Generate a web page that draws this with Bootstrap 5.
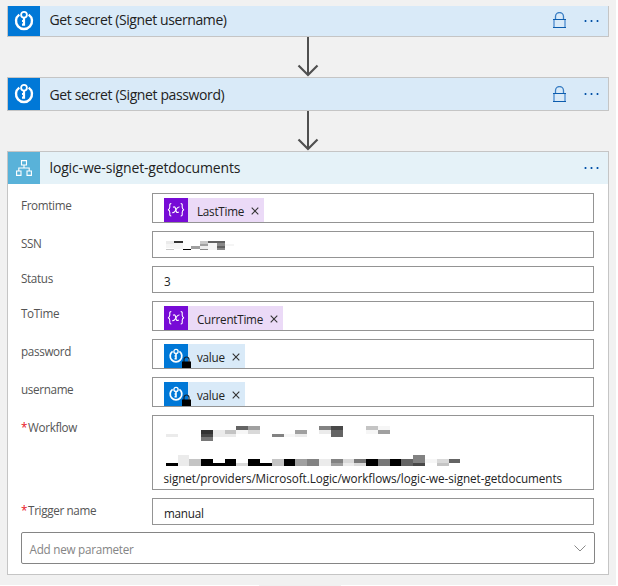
<!DOCTYPE html>
<html lang="en">
<head>
<meta charset="utf-8">
<meta name="viewport" content="width=device-width, initial-scale=1">
<title>Logic app designer</title>
<link href="https://cdn.jsdelivr.net/npm/bootstrap@5.3.0/dist/css/bootstrap.min.css" rel="stylesheet">
<style>
html,body{height:586px;overflow:hidden}
body{background:#fff;font-family:"Open Sans","Noto Sans",sans-serif;font-size:11.7px;letter-spacing:-.25px;line-height:16px;color:#222}
svg{display:block;flex:none}
.canvas{width:616px;height:585px;background:#f1f1f1;padding:6px 7px 0}
.step{width:602px;border:1px solid #c5c5c5}
.step-first{border-top:0}
.step-head{height:32px;background:#d9eaf8;font-size:14px;line-height:20px}
.step-first .step-head{height:30px}
.step-first .step-icon{height:30px;padding-bottom:1px}
.step-first .tools{padding-bottom:1px}
.step-head.flow{background:#e5f2f8}
.step-icon{width:32px;height:32px;background:#0078d7}
.flow .step-icon{background:#59b2d9}
.step-name{padding-left:9.5px;padding-top:1px;letter-spacing:-.38px}
.step-first .step-name{padding-top:0;padding-bottom:2px;letter-spacing:-.4px}
.flow .step-name{letter-spacing:-.15px;padding-top:0}
.tools{padding-right:9px;gap:18px}
.arrow{margin-left:290px;height:40px}
.panel{padding:9px 14px 10px 13px}
.fields{gap:8px}
.lbl{width:131px;color:#555;padding-top:4px;letter-spacing:-.35px}
.req{color:#e81123;margin-right:1px}
.box{width:442px;height:27px;border:1px solid #949494;padding-left:11px;color:#222}
.val{padding-top:2px}
.path{letter-spacing:-.06px;margin-left:-.5px}
.tall{height:30px}
.area{height:75px}
.token{height:24px;background:#ebdaf7;margin-top:4px}
.token .sq{width:24px;height:24px;background:#770bd6;margin-right:9px}
.token .nm{padding-top:1px}
.token.vault{background:#d9eaf8}
.token.vault .sq{background:#0078d7}
.token.vault .nm{padding-top:2px}
.token svg.x{margin:2px 5px 0 7px}
.combo{width:574px;height:32px;border:1px solid #858585;border-radius:2px;margin-top:7px;padding:1px 8px 0 7.5px;color:#858585}
.combo svg{margin-top:-1px}
.edge{width:82px;height:1px;margin-left:259px;background:#f1f1f1}
</style>
<script src="https://cdn.jsdelivr.net/npm/bootstrap@5.3.0/dist/js/bootstrap.bundle.min.js"></script>
</head>
<body>
<svg width="0" height="0" class="position-absolute">
<defs>
<symbol id="key" viewBox="0 0 20 22"><g fill="none" stroke="#fff"><path d="M5.300 4.600A8 8 0 1 0 14.700 4.600" stroke-width="2.400"/><circle cx="10" cy="4.700" r="2.900" stroke-width="1.800"/><path d="M10 7.500V15.800M10.600 11H8M10.600 14.600H8" stroke-width="2.200"/></g></symbol>
<symbol id="lock" viewBox="0 0 13 17"><path d="M2.500 7.500V4.500a4 4 0 0 1 8 0V7.500" fill="none" stroke="#3b7fc4" stroke-width="1.300"/><path d="M1 7v9M12 7v9" stroke="#7dacdd" stroke-width="2"/><path d="M0 7.500h13M0 15.500h13" stroke="#0c5cad"/></symbol>
<symbol id="dots" viewBox="0 0 15 2"><path d="M0 0h3v2H0zM6 0h3v2H6zM12 0h3v2h-3z" fill="#8dbbe6"/><path d="M1 0h1v2H1zM7 0h1v2H7zM13 0h1v2h-1z" fill="#0b4f9e"/></symbol>
<symbol id="down" viewBox="0 0 22 40"><path d="M11 0v38" stroke="#505050" stroke-width="2"/><path d="M1.500 28.500L11 38L20.500 28.500" fill="none" stroke="#505050" stroke-width="2.200"/></symbol>
<symbol id="cross" viewBox="0 0 8 8"><path d="M.7.7l6.600 6.600M7.300.7L.7 7.300" stroke="#333" stroke-width="1.100"/></symbol>
<symbol id="padlock" viewBox="0 0 9 12"><path d="M2 6V3.500a2.500 2.500 0 0 1 5 0V6" fill="none" stroke="#123" stroke-width="1.200"/><path d="M0 5.500h9V12H0z" fill="#000"/></symbol>
<symbol id="var" viewBox="0 0 24 24"><g fill="none" stroke="#fff" stroke-width="1.100"><path d="M7.300 5.500C5.300 5.500 5.800 7 5.800 9C5.800 11 5.300 11.500 4 11.700C5.300 12 5.800 12.600 5.800 14.600C5.800 16.600 5.300 18 7.300 18M16.700 5.500C18.700 5.500 18.200 7 18.200 9C18.200 11 18.700 11.500 20 11.700C18.700 12 18.200 12.600 18.200 14.600C18.200 16.600 18.700 18 16.700 18"/><path d="M9 9.300C11.300 8 11.300 10 11.800 12S12.700 15.300 14.700 14M15.500 9C13.500 8.500 12.500 11 11.500 12.500S9.800 15.200 8.300 14.500"/></g></symbol>
</defs>
</svg>

<main class="canvas">
  <section class="step step-first">
    <div class="step-head d-flex align-items-center">
      <div class="step-icon d-flex align-items-center justify-content-center"><svg width="20" height="22"><use href="#key"/></svg></div>
      <div class="step-name flex-grow-1">Get secret (Signet username)</div>
      <div class="tools d-flex align-items-center"><svg width="13" height="17"><use href="#lock"/></svg><svg width="15" height="2"><use href="#dots"/></svg></div>
    </div>
  </section>
  <svg class="arrow" width="22" height="40"><use href="#down"/></svg>
  <section class="step">
    <div class="step-head d-flex align-items-center">
      <div class="step-icon d-flex align-items-center justify-content-center"><svg width="20" height="22"><use href="#key"/></svg></div>
      <div class="step-name flex-grow-1">Get secret (Signet password)</div>
      <div class="tools d-flex align-items-center"><svg width="13" height="17"><use href="#lock"/></svg><svg width="15" height="2"><use href="#dots"/></svg></div>
    </div>
  </section>
  <svg class="arrow" width="22" height="40"><use href="#down"/></svg>
  <section class="step bg-white">
    <div class="step-head flow d-flex align-items-center">
      <div class="step-icon d-flex align-items-center justify-content-center">
        <svg width="16" height="16" viewBox="0 0 16 16" fill="none" stroke="#fff" stroke-width="1.100"><path d="M5.500.6h5v4.400h-5zM.6 11h4.400v4.400H.6zM11 11h4.400v4.400H11zM8 5v3M2.800 11V8h10.400v3"/></svg>
      </div>
      <div class="step-name flex-grow-1">logic-we-signet-getdocuments</div>
      <div class="tools d-flex align-items-center"><svg width="15" height="2"><use href="#dots"/></svg></div>
    </div>
    <div class="panel">
      <div class="fields d-flex flex-column">
        <div class="d-flex"><div class="lbl">Fromtime</div><div class="box tall d-flex"><div class="token d-flex align-items-center"><span class="sq"><svg width="24" height="24"><use href="#var"/></svg></span><span class="nm">LastTime</span><svg class="x" width="8" height="8"><use href="#cross"/></svg></div></div></div>
        <div class="d-flex"><div class="lbl">SSN</div><div class="box">
          <svg width="80" height="25" viewBox="164 232 80 25" shape-rendering="crispEdges"><path fill="#ebebeb" d="M166 241h8v3h-8z"/><path fill="#f5f5f5" d="M166 244h8v4h-8zM174 243h9v6h-9zM208 243h9v7h-9zM225 244h9v2h-9z"/><path fill="#c8c8c8" d="M166 249h8v1h-8zM200 241h8v3h-8z"/><path fill="#333" d="M174 241h9v2h-9z"/><path d="M183 249h8v1h-8z"/><path fill="#a0a0a0" d="M191 246h9v3h-9zM200 244h8v2h-8z"/><path fill="#eee" d="M200 246h8v3h-8z"/><path fill="#888" d="M200 249h8v1h-8zM217 243h8v7h-8z"/><path fill="#606060" d="M208 241h9v2h-9zM217 241h8v2h-8zM217 246h8v2h-8z"/></svg>
        </div></div>
        <div class="d-flex"><div class="lbl">Status</div><div class="box d-flex align-items-center"><span class="val">3</span></div></div>
        <div class="d-flex"><div class="lbl">ToTime</div><div class="box tall d-flex"><div class="token d-flex align-items-center"><span class="sq"><svg width="24" height="24"><use href="#var"/></svg></span><span class="nm">CurrentTime</span><svg class="x" width="8" height="8"><use href="#cross"/></svg></div></div></div>
        <div class="d-flex"><div class="lbl">password</div><div class="box tall d-flex"><div class="token vault d-flex align-items-center"><span class="sq"><svg width="28" height="24"><use href="#key" x="4" y="4" width="16" height="16"/><use href="#padlock" x="18" y="12" width="9" height="12"/></svg></span><span class="nm">value</span><svg class="x" width="8" height="8"><use href="#cross"/></svg></div></div></div>
        <div class="d-flex"><div class="lbl">username</div><div class="box tall d-flex"><div class="token vault d-flex align-items-center"><span class="sq"><svg width="28" height="24"><use href="#key" x="4" y="4" width="16" height="16"/><use href="#padlock" x="18" y="12" width="9" height="12"/></svg></span><span class="nm">value</span><svg class="x" width="8" height="8"><use href="#cross"/></svg></div></div></div>
        <div class="d-flex"><div class="lbl"><span class="req">*</span>Workflow</div><div class="box area">
          <svg width="310" height="54" viewBox="164 416 310 54" shape-rendering="crispEdges">
            <path fill="#ebebeb" d="M166 434h12v3h-12zM213 430h12v7h-12zM225 434h11v3h-11zM295 434h12v3h-12zM319 430h12v4h-12zM178 455h11v11h-11zM319 459h12v7h-12zM343 463h11v3h-11z"/>
            <path fill="#f6f6f6" d="M236 430h12v4h-12zM284 434h11v3h-11zM366 430h12v4h-12zM378 426h12v4h-12zM425 459h12v4h-12z"/>
            <path fill="#333" d="M201 430h12v4h-12z"/>
            <path fill="#484848" d="M201 434h12v3h-12zM331 426h12v4h-12zM413 463h12v3h-12z"/>
            <path fill="#777" d="M201 437h12v4h-12zM354 459h12v4h-12zM378 459h12v7h-12z"/>
            <path fill="#c4c4c4" d="M225 430h11v4h-11zM366 426h12v4h-12zM189 459h12v7h-12zM272 459h12v7h-12zM437 463h12v3h-12z"/>
            <path fill="#646464" d="M236 426h12v4h-12zM331 430h12v7h-12zM401 459h12v7h-12zM449 459h11v4h-11z"/>
            <path fill="#a0a0a0" d="M248 426h12v4h-12zM295 430h12v4h-12zM378 430h12v4h-12zM295 459h12v7h-12zM331 463h12v3h-12z"/>
            <path fill="#d9d9d9" d="M248 430h12v4h-12zM236 463h12v3h-12zM343 459h11v4h-11zM354 463h12v3h-12zM437 459h12v4h-12z"/>
            <path fill="#828282" d="M272 434h12v3h-12zM319 426h12v4h-12zM307 459h12v7h-12zM331 459h12v4h-12zM413 455h12v8h-12z"/>
            <path d="M166 463h12v3h-12zM201 459h12v7h-12zM213 463h12v3h-12zM225 459h11v7h-11zM248 459h12v7h-12zM260 463h12v3h-12zM284 459h11v7h-11zM366 459h12v7h-12zM390 459h11v7h-11z"/>
          </svg>
          <div class="path">signet/providers/Microsoft.Logic/workflows/logic-we-signet-getdocuments</div>
        </div></div>
        <div class="d-flex"><div class="lbl"><span class="req">*</span>Trigger name</div><div class="box d-flex align-items-center"><span class="val">manual</span></div></div>
      </div>
      <div class="combo d-flex align-items-center justify-content-between"><span>Add new parameter</span><svg width="12" height="7" viewBox="0 0 12 7" fill="none" stroke="#8a8a8a"><path d="M.5.5L6 6L11.500.5"/></svg></div>
    </div>
  </section>
</main>
<div class="edge"></div>
</body>
</html>
